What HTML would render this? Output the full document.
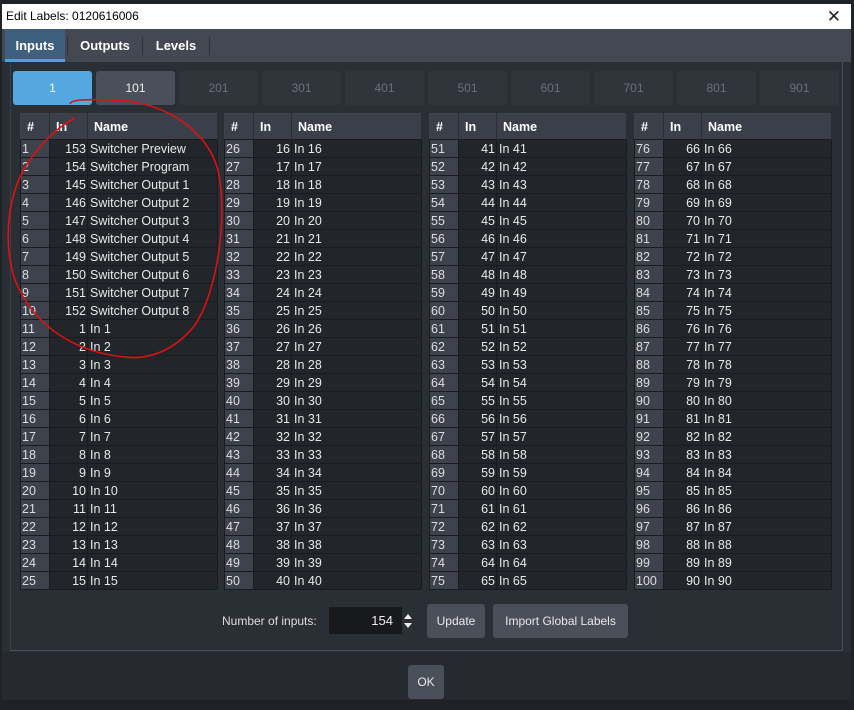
<!DOCTYPE html>
<html><head><meta charset="utf-8"><style>
*{margin:0;padding:0;box-sizing:border-box}
body{width:854px;height:710px;background:#1f2226;position:relative;overflow:hidden;font-family:"Liberation Sans",Arial,sans-serif;color:#e8e8e8}
#title{position:absolute;left:2px;top:4px;width:849px;height:25px;background:#fff;color:#000;font-size:12px;line-height:25px;padding-left:4px}
#close{position:absolute;right:10px;top:0;font-size:17px;color:#222;font-weight:normal}
#dlg{position:absolute;left:2px;top:29px;width:849px;height:681px;background:#2a2e35}
#tabs{position:absolute;left:0;top:0;width:849px;height:33px;background:#434853}
.tab{position:absolute;top:0;height:33px;line-height:33px;font-size:13px;font-weight:bold;color:#fff;text-align:center}
.sep{position:absolute;top:8px;width:1px;height:18px;background:#2c3038}
#panel{position:absolute;left:8px;top:33px;width:833px;height:589px;border-right:1px solid #4a4e57;border-bottom:1px solid #4a4e57;border-left:1px solid #3a3e46}
.pb{position:absolute;top:71px;width:79px;height:34px;border-radius:3px;background:#30343b;color:#6b7078;font-size:12px;text-align:center;line-height:34px}
table{position:absolute;top:113px;border-collapse:collapse;font-size:12.5px;border:1px solid #3e424a}
th{background:#3a3f49;height:26px;text-align:left;padding-left:6px;font-weight:bold;color:#fff;border-right:1px solid #2a2e35}
td{height:18px;background:#22252a;border:1px solid #191b1f;padding:0 0 0 1px;white-space:nowrap;line-height:16px}
td:first-child{background:#3d424c;width:29px;color:#ddd}
td:nth-child(2){width:38px;text-align:right;padding-right:1px}
td:nth-child(3){width:130px;padding-left:2px}
.btn{position:absolute;background:#4a4f5a;border-radius:3px;color:#e8e8e8;font-size:12px;text-align:center}
</style></head><body>
<div id="title">Edit Labels: 0120616006<span id="close">✕</span></div>
<div id="dlg">
<div id="tabs">
<div class="tab" style="left:3px;width:60px;background:#3f5f7e">Inputs<div style="position:absolute;left:0;bottom:0;width:60px;height:3px;background:#4fa3dc"></div></div>
<div class="sep" style="left:65px"></div>
<div class="tab" style="left:66px;width:74px">Outputs</div>
<div class="sep" style="left:140px"></div>
<div class="tab" style="left:141px;width:66px">Levels</div>
<div class="sep" style="left:207px"></div>
</div>
<div id="panel"></div>
<div style="position:absolute;left:0;top:623px;width:849px;height:48px;background:#262a30"></div>
<div style="position:absolute;left:0;top:671px;width:849px;height:10px;background:#1e2125"></div>
</div>
<div class="pb" style="left:13px;background:#55a7e0;color:#fff">1</div>
<div class="pb" style="left:96px;background:#4a4f5a;color:#eee">101</div>
<div class="pb" style="left:179px">201</div>
<div class="pb" style="left:262px">301</div>
<div class="pb" style="left:345px">401</div>
<div class="pb" style="left:428px">501</div>
<div class="pb" style="left:511px">601</div>
<div class="pb" style="left:594px">701</div>
<div class="pb" style="left:677px">801</div>
<div class="pb" style="left:760px">901</div>

<table style="left:20px"><tr><th style="width:29px">#</th><th style="width:38px">In</th><th style="width:130px">Name</th></tr>
<tr><td>1</td><td>153</td><td>Switcher Preview</td></tr>
<tr><td>2</td><td>154</td><td>Switcher Program</td></tr>
<tr><td>3</td><td>145</td><td>Switcher Output 1</td></tr>
<tr><td>4</td><td>146</td><td>Switcher Output 2</td></tr>
<tr><td>5</td><td>147</td><td>Switcher Output 3</td></tr>
<tr><td>6</td><td>148</td><td>Switcher Output 4</td></tr>
<tr><td>7</td><td>149</td><td>Switcher Output 5</td></tr>
<tr><td>8</td><td>150</td><td>Switcher Output 6</td></tr>
<tr><td>9</td><td>151</td><td>Switcher Output 7</td></tr>
<tr><td>10</td><td>152</td><td>Switcher Output 8</td></tr>
<tr><td>11</td><td>1</td><td>In 1</td></tr>
<tr><td>12</td><td>2</td><td>In 2</td></tr>
<tr><td>13</td><td>3</td><td>In 3</td></tr>
<tr><td>14</td><td>4</td><td>In 4</td></tr>
<tr><td>15</td><td>5</td><td>In 5</td></tr>
<tr><td>16</td><td>6</td><td>In 6</td></tr>
<tr><td>17</td><td>7</td><td>In 7</td></tr>
<tr><td>18</td><td>8</td><td>In 8</td></tr>
<tr><td>19</td><td>9</td><td>In 9</td></tr>
<tr><td>20</td><td>10</td><td>In 10</td></tr>
<tr><td>21</td><td>11</td><td>In 11</td></tr>
<tr><td>22</td><td>12</td><td>In 12</td></tr>
<tr><td>23</td><td>13</td><td>In 13</td></tr>
<tr><td>24</td><td>14</td><td>In 14</td></tr>
<tr><td>25</td><td>15</td><td>In 15</td></tr>
</table>

<table style="left:224px"><tr><th style="width:29px">#</th><th style="width:38px">In</th><th style="width:130px">Name</th></tr>
<tr><td>26</td><td>16</td><td>In 16</td></tr>
<tr><td>27</td><td>17</td><td>In 17</td></tr>
<tr><td>28</td><td>18</td><td>In 18</td></tr>
<tr><td>29</td><td>19</td><td>In 19</td></tr>
<tr><td>30</td><td>20</td><td>In 20</td></tr>
<tr><td>31</td><td>21</td><td>In 21</td></tr>
<tr><td>32</td><td>22</td><td>In 22</td></tr>
<tr><td>33</td><td>23</td><td>In 23</td></tr>
<tr><td>34</td><td>24</td><td>In 24</td></tr>
<tr><td>35</td><td>25</td><td>In 25</td></tr>
<tr><td>36</td><td>26</td><td>In 26</td></tr>
<tr><td>37</td><td>27</td><td>In 27</td></tr>
<tr><td>38</td><td>28</td><td>In 28</td></tr>
<tr><td>39</td><td>29</td><td>In 29</td></tr>
<tr><td>40</td><td>30</td><td>In 30</td></tr>
<tr><td>41</td><td>31</td><td>In 31</td></tr>
<tr><td>42</td><td>32</td><td>In 32</td></tr>
<tr><td>43</td><td>33</td><td>In 33</td></tr>
<tr><td>44</td><td>34</td><td>In 34</td></tr>
<tr><td>45</td><td>35</td><td>In 35</td></tr>
<tr><td>46</td><td>36</td><td>In 36</td></tr>
<tr><td>47</td><td>37</td><td>In 37</td></tr>
<tr><td>48</td><td>38</td><td>In 38</td></tr>
<tr><td>49</td><td>39</td><td>In 39</td></tr>
<tr><td>50</td><td>40</td><td>In 40</td></tr>
</table>

<table style="left:429px"><tr><th style="width:29px">#</th><th style="width:38px">In</th><th style="width:130px">Name</th></tr>
<tr><td>51</td><td>41</td><td>In 41</td></tr>
<tr><td>52</td><td>42</td><td>In 42</td></tr>
<tr><td>53</td><td>43</td><td>In 43</td></tr>
<tr><td>54</td><td>44</td><td>In 44</td></tr>
<tr><td>55</td><td>45</td><td>In 45</td></tr>
<tr><td>56</td><td>46</td><td>In 46</td></tr>
<tr><td>57</td><td>47</td><td>In 47</td></tr>
<tr><td>58</td><td>48</td><td>In 48</td></tr>
<tr><td>59</td><td>49</td><td>In 49</td></tr>
<tr><td>60</td><td>50</td><td>In 50</td></tr>
<tr><td>61</td><td>51</td><td>In 51</td></tr>
<tr><td>62</td><td>52</td><td>In 52</td></tr>
<tr><td>63</td><td>53</td><td>In 53</td></tr>
<tr><td>64</td><td>54</td><td>In 54</td></tr>
<tr><td>65</td><td>55</td><td>In 55</td></tr>
<tr><td>66</td><td>56</td><td>In 56</td></tr>
<tr><td>67</td><td>57</td><td>In 57</td></tr>
<tr><td>68</td><td>58</td><td>In 58</td></tr>
<tr><td>69</td><td>59</td><td>In 59</td></tr>
<tr><td>70</td><td>60</td><td>In 60</td></tr>
<tr><td>71</td><td>61</td><td>In 61</td></tr>
<tr><td>72</td><td>62</td><td>In 62</td></tr>
<tr><td>73</td><td>63</td><td>In 63</td></tr>
<tr><td>74</td><td>64</td><td>In 64</td></tr>
<tr><td>75</td><td>65</td><td>In 65</td></tr>
</table>

<table style="left:634px"><tr><th style="width:29px">#</th><th style="width:38px">In</th><th style="width:130px">Name</th></tr>
<tr><td>76</td><td>66</td><td>In 66</td></tr>
<tr><td>77</td><td>67</td><td>In 67</td></tr>
<tr><td>78</td><td>68</td><td>In 68</td></tr>
<tr><td>79</td><td>69</td><td>In 69</td></tr>
<tr><td>80</td><td>70</td><td>In 70</td></tr>
<tr><td>81</td><td>71</td><td>In 71</td></tr>
<tr><td>82</td><td>72</td><td>In 72</td></tr>
<tr><td>83</td><td>73</td><td>In 73</td></tr>
<tr><td>84</td><td>74</td><td>In 74</td></tr>
<tr><td>85</td><td>75</td><td>In 75</td></tr>
<tr><td>86</td><td>76</td><td>In 76</td></tr>
<tr><td>87</td><td>77</td><td>In 77</td></tr>
<tr><td>88</td><td>78</td><td>In 78</td></tr>
<tr><td>89</td><td>79</td><td>In 79</td></tr>
<tr><td>90</td><td>80</td><td>In 80</td></tr>
<tr><td>91</td><td>81</td><td>In 81</td></tr>
<tr><td>92</td><td>82</td><td>In 82</td></tr>
<tr><td>93</td><td>83</td><td>In 83</td></tr>
<tr><td>94</td><td>84</td><td>In 84</td></tr>
<tr><td>95</td><td>85</td><td>In 85</td></tr>
<tr><td>96</td><td>86</td><td>In 86</td></tr>
<tr><td>97</td><td>87</td><td>In 87</td></tr>
<tr><td>98</td><td>88</td><td>In 88</td></tr>
<tr><td>99</td><td>89</td><td>In 89</td></tr>
<tr><td>100</td><td>90</td><td>In 90</td></tr>
</table>

<div style="position:absolute;left:222px;top:614px;font-size:12px;color:#ddd">Number of inputs:</div>
<div style="position:absolute;left:329px;top:607px;width:73px;height:27px;background:#17191c;font-size:13px;line-height:27px;text-align:right;padding-right:9px;color:#eee">154</div>
<svg style="position:absolute;left:402px;top:612px" width="12" height="18"><path d="M2 7 L6 2 L10 7Z M2 11 L6 16 L10 11Z" fill="#eee"/></svg>
<div class="btn" style="left:427px;top:604px;width:58px;height:34px;line-height:34px">Update</div>
<div class="btn" style="left:493px;top:604px;width:135px;height:34px;line-height:34px">Import Global Labels</div>
<div class="btn" style="left:408px;top:665px;width:36px;height:34px;line-height:34px">OK</div>

<svg style="position:absolute;left:0;top:0" width="854" height="710"><path d="M70 104 C72 98 95 100 115 100 C160 102 205 125 218 170 C228 215 218 290 195 325 C175 350 150 360 125 357 C80 353 35 330 15 280 C2 240 8 190 30 160 C45 138 60 126 75 118" fill="none" stroke="#e01010" stroke-width="1.6"/></svg>
</body></html>
